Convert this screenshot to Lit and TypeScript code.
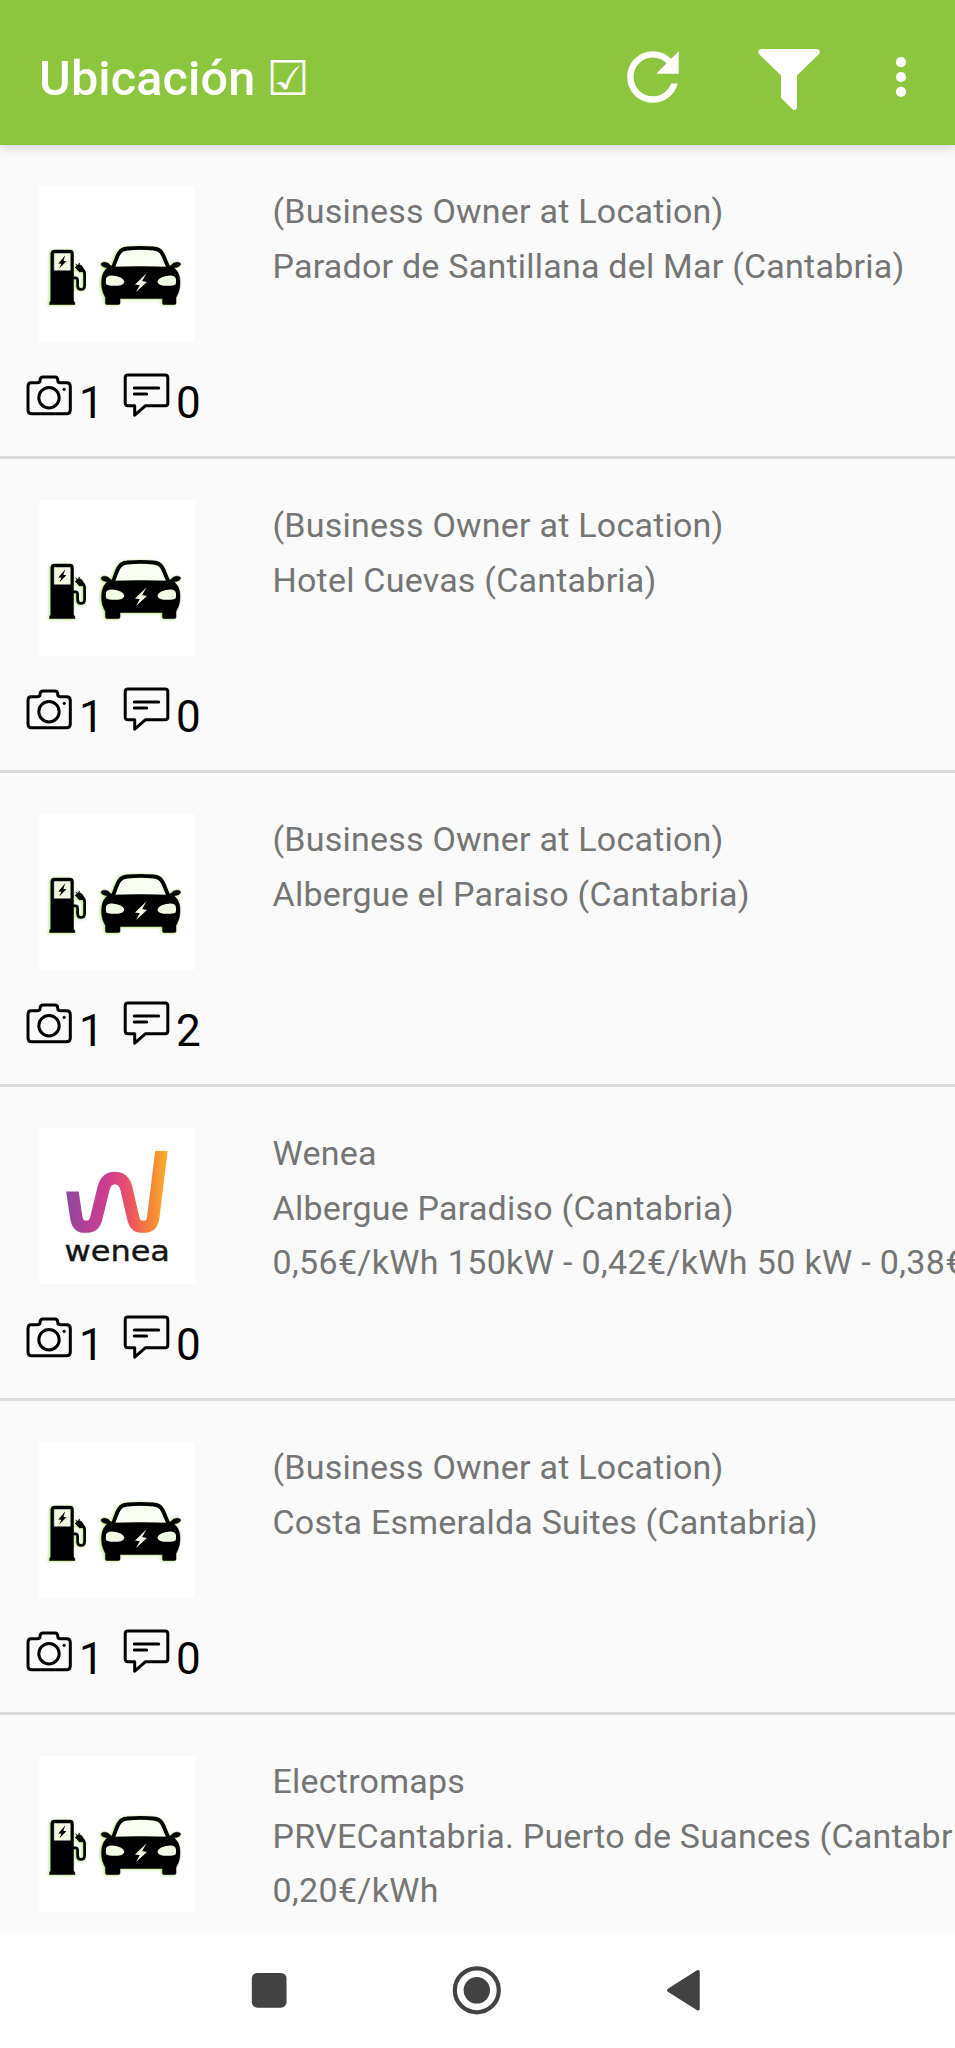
import { LitElement, html, css, svg } from "lit";
import { customElement, property } from "lit/decorators.js";

interface Station {
  lines: string[];
  photos: number;
  comments: number;
  brand?: "wenea";
}

const STATIONS: Station[] = [
  { lines: ["(Business Owner at Location)", "Parador de Santillana del Mar (Cantabria)"], photos: 1, comments: 0 },
  { lines: ["(Business Owner at Location)", "Hotel Cuevas (Cantabria)"], photos: 1, comments: 0 },
  { lines: ["(Business Owner at Location)", "Albergue el Paraiso (Cantabria)"], photos: 1, comments: 2 },
  {
    lines: ["Wenea", "Albergue Paradiso (Cantabria)", "0,56€/kWh 150kW - 0,42€/kWh 50 kW - 0,38€/kWh"],
    photos: 1,
    comments: 0,
    brand: "wenea",
  },
  { lines: ["(Business Owner at Location)", "Costa Esmeralda Suites (Cantabria)"], photos: 1, comments: 0 },
  { lines: ["Electromaps", "PRVECantabria. Puerto de Suances (Cantabria)", "0,20€/kWh"], photos: 1, comments: 0 },
];

const carShapes = svg`
  <path d="M73.500 82 C76 77 77.500 70 80.500 66 Q83 62.300 88 62 Q101.500 60.800 115 62 Q120 62.300 122.500 66 C125.500 70 127 77 130 82" fill="none" stroke="currentColor" stroke-width="3.800"/>
  <path d="M62 77.500 Q63 75.300 66 75.700 Q70 76.300 71.500 79 L74.500 80.500 Q101.500 79.500 128.500 80.500 L132 79 Q133.500 76.300 137.500 75.700 Q141 75.300 141.700 77.500 Q141.500 80.500 135 81.300 Q139.500 85 140.700 91 Q142 101 138.500 108 L137 111 V116.500 Q137 118 135.500 118 H125 Q123.500 118 123.500 116.500 V112 H81 V116.500 Q81 118 79.500 118 H68 Q66.500 118 66.500 116.500 V111 L65 108 Q61.500 101 63 91 Q64 85 68.500 81.300 Q62.500 80.500 62 77.500Z" fill="currentColor" stroke="currentColor" stroke-width=".5"/>`;

const pumpShapes = svg`
  <path fill-rule="evenodd" d="M11.800 67 Q11.800 63.600 15.200 63.600 H31.200 Q34.500 63.600 34.500 67 V114.500 Q36 114.800 36 118 H10.500 Q10.500 114.800 11.800 114.500Z M14.800 67.200 V84.300 H31.800 V67.200 Q31.800 66.500 31 66.500 H15.600 Q14.800 66.500 14.800 67.200Z" fill="currentColor" stroke="currentColor" stroke-width=".5"/>
  <path d="M34 91.300 H36.500 Q38.600 91.300 38.600 94 V99 Q38.600 103 42 103 Q45.600 103 45.600 99 V87 Q45.600 84 42.500 82.500" fill="none" stroke="currentColor" stroke-width="2.700"/>
  <path d="M36.500 80.800 L39.500 77.900 L43 79.700 L45.300 84.500 L40.500 85.300Z M38.400 79 L36.700 77.700 M40.800 77.700 L39.800 76.400" fill="currentColor" stroke="currentColor" stroke-width="1"/>`;

@customElement("ev-thumb")
class EvThumb extends LitElement {
  static styles = css`
    :host { display: block; width: 156px; height: 156px; background: #fff; color: #000; }
    svg { display: block; }
    .glow { color: #a8e468; filter: blur(1.8px); }
  `;
  render() {
    return html`<svg width="156" height="156" viewBox="0 -.5 156 156">
      <g class="glow" transform="translate(-1 .5)">${pumpShapes}${carShapes}</g>
      <path d="M75.500 80 Q79 68 83 65 Q101.500 61.500 120 65 Q125 68 128 80Z" fill="#f9fff1"/>
      <rect x="14.500" y="66.500" width="17.500" height="18" fill="#f1fbe3"/>
      ${pumpShapes}${carShapes}
      <path d="M26.300 68.700 L19.300 76.900 L22.400 77.200 L20.200 82 L27.400 74.700 L24.400 74.300Z" fill="#000"/>
      <path d="M67 92.500 Q67.500 88.800 73 89 Q84 89.800 85.300 95 Q85.300 98.600 79 99.200 Q70 99.700 67.300 98 Q66.500 95.500 67 92.500Z M136.900 92.500 Q136.300 88.800 131 89 Q119.800 89.800 118.500 95 Q118.500 98.600 124.800 99.200 Q133.800 99.700 136.600 98 Q137.400 95.500 136.900 92.500Z M107.300 87 L96 98 L100.800 98.700 L97 105.600 L108 95.500 L103.200 94.600Z" fill="#f1fbe3"/>
    </svg>`;
  }
}

@customElement("wenea-thumb")
class WeneaThumb extends LitElement {
  static styles = css`
    :host { display: block; width: 156px; height: 156px; background: #fff; }
    svg { display: block; }
    .word { font-family: "DejaVu Sans", sans-serif; font-size: 28px; }
  `;
  render() {
    return html`<svg width="156" height="156" viewBox="0 0 156 156">
      <defs>
        <linearGradient id="w" gradientUnits="userSpaceOnUse" x1="27" y1="0" x2="129" y2="0">
          <stop offset="0" stop-color="#8b4a9c"/><stop offset=".2" stop-color="#b43e98"/>
          <stop offset=".46" stop-color="#d63f8c"/><stop offset=".66" stop-color="#ee5a5a"/>
          <stop offset=".85" stop-color="#f58a35"/><stop offset="1" stop-color="#fbb02a"/>
        </linearGradient>
        <clipPath id="c"><path d="M20 63.500 H46 V23 H140 V120 H20Z"/></clipPath>
      </defs>
      <path clip-path="url(#c)" d="M32.300 56 L37.200 89 Q38.600 98.600 45.500 98.600 H48.500 Q55.500 98.600 57.600 89 L64.400 61 Q67 50 75.800 50 Q85 50 87.500 61 L94 89 Q96 98.600 102 98.600 H106 Q113 98.600 114.300 89 L123.400 15" fill="none" stroke="url(#w)" stroke-width="12.400"/>
      <text class="word" x="25.500" y="132.500" textLength="105.500" lengthAdjust="spacingAndGlyphs" fill="#151515" stroke="#151515" stroke-width=".4">wenea</text>
    </svg>`;
  }
}

@customElement("station-row")
class StationRow extends LitElement {
  @property({ attribute: false }) station!: Station;

  static styles = css`
    :host {
      display: grid;
      grid-template-columns: 272.500px 1fr;
      flex: none;
      box-sizing: border-box;
      height: 314px;
      border-bottom: 3px solid #dadada;
      overflow: hidden;
    }
    .side { padding-top: 41px; }
    .thumb { margin-left: 38.500px; }
    .stats { display: flex; align-items: flex-start; padding: 27px 0 0 22px; color: #000; }
    .stats svg { flex: none; }
    .n { font-size: 44px; line-height: 52px; margin: 8px 0 0 -1px; }
    .photos { width: 43px; }
    .lines { padding-top: 39px; min-width: 0; }
    .line { font-size: 34px; line-height: 54.600px; color: #757575; white-space: nowrap; letter-spacing: 0.225px; }
    .line:nth-child(3) { letter-spacing: 0.350px; }
  `;

  render() {
    const s = this.station;
    return html`
      <div class="side">
        ${s.brand ? html`<wenea-thumb class="thumb"></wenea-thumb>` : html`<ev-thumb class="thumb"></ev-thumb>`}
        <div class="stats">
          <svg width="58" height="52" viewBox="0 0 58 52" fill="none" stroke="#000" stroke-width="3" stroke-linejoin="round">
            <path d="M9 13.800 H15.200 Q18 13.800 18 11.500 Q18.200 8 21 8 H33 Q35.700 8 35.800 11.500 Q35.800 13.800 38.500 13.800 H44.500 Q48.300 13.800 48.300 17.500 V41 Q48.300 44.800 44.500 44.800 H9.500 Q6 44.800 6 41 V17.500 Q6 13.800 9 13.800Z"/>
            <circle cx="27" cy="28.700" r="10.200"/><circle cx="42.200" cy="20.300" r="1.600" fill="#000" stroke="none"/>
          </svg>
          <span class="n photos">${s.photos}</span>
          <svg width="55" height="52" viewBox="0 0 55 52" fill="none" stroke="#000" stroke-width="3" stroke-linejoin="round" stroke-linecap="round">
            <path d="M6 6 H43 Q45.800 6 45.800 8.800 V34 Q45.800 36.800 43 36.800 H23.300 L12.700 46.200 V36.800 H6 Q3.200 36.800 3.200 34 V8.800 Q3.200 6 6 6Z M12.300 19 H36.700 M12.300 25 H24.700"/>
          </svg>
          <span class="n">${s.comments}</span>
        </div>
      </div>
      <div class="lines">${s.lines.map((l) => html`<div class="line">${l}</div>`)}</div>
    `;
  }
}

@customElement("app-root")
class AppRoot extends LitElement {
  static styles = css`
    :host {
      display: flex;
      flex-direction: column;
      width: 955px;
      height: 2048px;
      overflow: hidden;
      background: #fafafa;
      font-family: Roboto, sans-serif;
    }
    .bar {
      position: relative;
      z-index: 1;
      display: flex;
      align-items: center;
      flex: none;
      box-sizing: border-box;
      height: 145px;
      padding: 12px 0 0 39px;
      background: #8cc63f;
      color: #fff;
      box-shadow: 0 3px 9px rgba(0, 0, 0, 0.15);
    }
    .title { flex: 1; margin: 0; font-size: 48.500px; font-weight: 500; line-height: 56px; white-space: nowrap; letter-spacing: 0.150px; }
    .check { margin-left: -1px; font-family: "DejaVu Sans", sans-serif; font-weight: 400; font-size: 48px; line-height: 1px; }
    .actions { display: flex; flex: none; height: 145px; margin-top: -12px; }
    .list { flex: 1; min-height: 0; overflow: hidden; display: flex; flex-direction: column; }
    .nav { flex: none; height: 116px; background: #fefefe; }
    .nav svg, .actions svg { display: block; }
  `;

  render() {
    return html`
      <header class="bar">
        <h1 class="title">Ubicación <span class="check">☑</span></h1>
        <div class="actions">
          <svg width="355" height="145" viewBox="600 0 355 145" fill="#fff">
            <path transform="translate(614.300 38.300) scale(3.220)" d="M17.650 6.350C16.200 4.900 14.210 4 12 4c-4.420 0-7.990 3.580-7.990 8s3.570 8 7.990 8c3.730 0 6.840-2.550 7.730-6h-2.080c-.82 2.330-3.040 4-5.650 4-3.310 0-6-2.690-6-6s2.690-6 6-6c1.660 0 3.140.69 4.220 1.780L13 11h7V4l-2.350 2.350z"/>
            <path d="M761 49 H817 Q821.500 50 819 54 L797 75.500 V107 Q796.500 111 793 109.700 L781 98 V75.500 L759 54 Q756.500 50 761 49Z"/>
            <circle cx="901" cy="62.200" r="5.100"/><circle cx="901" cy="77" r="5.100"/><circle cx="901" cy="91.800" r="5.100"/>
          </svg>
        </div>
      </header>
      <main class="list">
        ${STATIONS.map((s) => html`<station-row .station=${s}></station-row>`)}
      </main>
      <nav class="nav">
        <svg width="955" height="116" viewBox="0 1932 955 116" fill="#424242">
          <rect x="251.800" y="1973" width="34.700" height="34.700" rx="5.500"/>
          <circle cx="476.800" cy="1990.300" r="22" fill="none" stroke="#424242" stroke-width="4.200"/>
          <circle cx="476.800" cy="1990.300" r="13.200"/>
          <path d="M668.800 1990.300 L698 1971.800 V2008.800Z" stroke="#424242" stroke-width="3.500" stroke-linejoin="round"/>
        </svg>
      </nav>
    `;
  }
}
